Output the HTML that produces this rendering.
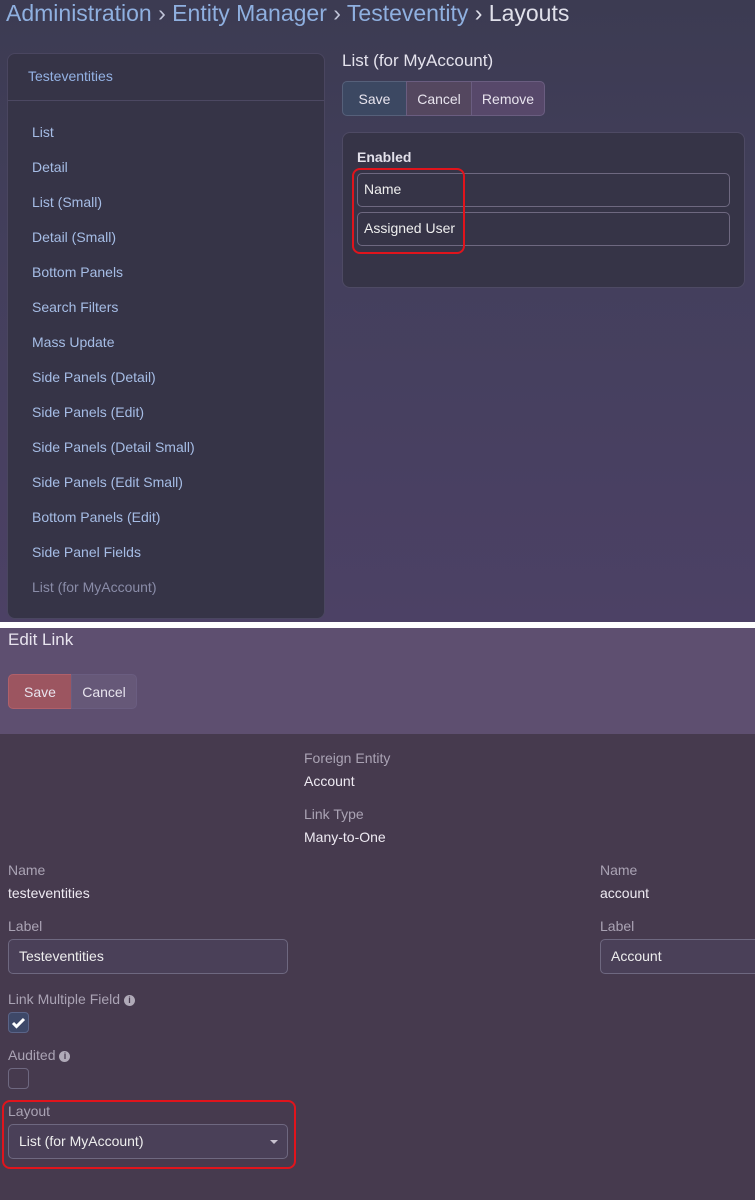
<!DOCTYPE html>
<html><head><meta charset="utf-8"><style>
*{box-sizing:border-box;margin:0;padding:0}
body{width:755px;height:1200px;position:relative;overflow:hidden;font-family:"Liberation Sans",sans-serif;background:#fff}
.a{position:absolute;white-space:nowrap}
#top{position:absolute;left:0;top:0;width:755px;height:622px;background:linear-gradient(180deg,#3c3b52 0%,#433f5c 40%,#4c4165 100%)}
#b1{position:absolute;left:0;top:628px;width:755px;height:106px;background:#5e4f70}
#b2{position:absolute;left:0;top:734px;width:755px;height:466px;background:#463a4e}
.side{position:absolute;left:7px;top:53px;width:318px;height:566px;background:#363447;border:1px solid #4a4660;border-radius:8px}
.it{position:absolute;left:32px;font-size:14px;color:#a6bde6}
.btn{position:absolute;height:35px;font-size:14px;color:#e8e4ee;text-align:center;line-height:34px;border:1px solid #6a5d80}
.inp{position:absolute;border:1px solid #6e6880;border-radius:5px;font-size:14px;color:#eee;padding-left:6px;line-height:31px}
.lbl{font-size:14px;color:#aaa3b4}
.val{font-size:14px;color:#eeeaf2}
.red{position:absolute;border:2px solid #e0141c;border-radius:8px}
.ic{display:inline-block;width:11px;height:11px;border-radius:50%;background:#b0aab8;color:#463a4e;font-size:9px;font-weight:bold;text-align:center;line-height:11px;vertical-align:1px;margin-left:4px}
</style></head><body>
<div id="top"></div>
<div class="a" style="left:6px;top:0px;font-size:23px;color:#8fb0e0">Administration <span style="color:#c0c4d8">›</span> Entity Manager <span style="color:#c0c4d8">›</span> Testeventity <span style="color:#e0e0ea">› Layouts</span></div>
<div class="side"></div>
<div class="a" style="left:28px;top:68px;font-size:14px;color:#94b2e4">Testeventities</div>
<div class="a" style="left:8px;top:100px;width:316px;height:1px;background:#4c4862"></div>
<div class="it a" style="top:124px">List</div>
<div class="it a" style="top:159px">Detail</div>
<div class="it a" style="top:194px">List (Small)</div>
<div class="it a" style="top:229px">Detail (Small)</div>
<div class="it a" style="top:264px">Bottom Panels</div>
<div class="it a" style="top:299px">Search Filters</div>
<div class="it a" style="top:334px">Mass Update</div>
<div class="it a" style="top:369px">Side Panels (Detail)</div>
<div class="it a" style="top:404px">Side Panels (Edit)</div>
<div class="it a" style="top:439px">Side Panels (Detail Small)</div>
<div class="it a" style="top:474px">Side Panels (Edit Small)</div>
<div class="it a" style="top:509px">Bottom Panels (Edit)</div>
<div class="it a" style="top:544px">Side Panel Fields</div>
<div class="it a" style="top:579px;color:#8a8ca8">List (for MyAccount)</div>

<div class="a" style="left:342px;top:51px;font-size:17px;color:#e4e2ec">List (for MyAccount)</div>
<div class="btn" style="left:342px;top:81px;width:65px;background:#3c4862;border-color:#56607a;border-radius:5px 0 0 5px">Save</div>
<div class="btn" style="left:406px;top:81px;width:66px;background:#54475f">Cancel</div>
<div class="btn" style="left:471px;top:81px;width:74px;background:#57486a;border-radius:0 5px 5px 0">Remove</div>
<div class="a" style="left:342px;top:132px;width:403px;height:156px;background:#363447;border:1px solid #4e4a64;border-radius:8px"></div>
<div class="a" style="left:357px;top:149px;font-size:14px;font-weight:bold;color:#e2e0ea">Enabled</div>
<div class="inp" style="left:357px;top:173px;width:373px;height:34px">Name</div>
<div class="inp" style="left:357px;top:212px;width:373px;height:34px">Assigned User</div>
<div class="red" style="left:352px;top:168px;width:113px;height:86px"></div>

<div id="b1"></div>
<div id="b2"></div>
<div class="a" style="left:8px;top:630px;font-size:17px;color:#e8e4ee">Edit Link</div>
<div class="btn" style="left:8px;top:674px;width:64px;background:#9c5560;border-color:#b0606a;border-radius:5px 0 0 5px">Save</div>
<div class="btn" style="left:71px;top:674px;width:66px;background:#665878;border-radius:0 5px 5px 0">Cancel</div>

<div class="a lbl" style="left:304px;top:750px">Foreign Entity</div>
<div class="a val" style="left:304px;top:773px">Account</div>
<div class="a lbl" style="left:304px;top:806px">Link Type</div>
<div class="a val" style="left:304px;top:829px">Many-to-One</div>
<div class="a lbl" style="left:8px;top:862px">Name</div>
<div class="a val" style="left:8px;top:885px">testeventities</div>
<div class="a lbl" style="left:600px;top:862px">Name</div>
<div class="a val" style="left:600px;top:885px">account</div>
<div class="a lbl" style="left:8px;top:918px">Label</div>
<div class="inp" style="left:8px;top:939px;width:280px;height:35px;background:#4a4058;padding-left:10px;line-height:33px">Testeventities</div>
<div class="a lbl" style="left:600px;top:918px">Label</div>
<div class="inp" style="left:600px;top:939px;width:170px;height:35px;background:#4a4058;padding-left:10px;line-height:33px">Account</div>
<div class="a lbl" style="left:8px;top:991px">Link Multiple Field<span class="ic">i</span></div>
<div class="a" style="left:8px;top:1012px;width:21px;height:21px;border-radius:4px;background:#3e4868;border:1px solid #5a6488"><svg width="19" height="19" viewBox="0 0 19 19"><path d="M4 10l3.5 3.5L15 6" stroke="#fff" stroke-width="3" fill="none"/></svg></div>
<div class="a lbl" style="left:8px;top:1047px">Audited<span class="ic">i</span></div>
<div class="a" style="left:8px;top:1068px;width:21px;height:21px;border-radius:4px;border:1px solid #6e6880"></div>
<div class="a lbl" style="left:8px;top:1103px">Layout</div>
<div class="inp" style="left:8px;top:1124px;width:280px;height:35px;background:#4a4058;padding-left:10px;line-height:33px">List (for MyAccount)</div>
<div class="a" style="left:270px;top:1140px;width:0;height:0;border-left:4px solid transparent;border-right:4px solid transparent;border-top:4px solid #c8c2d0"></div>
<div class="red" style="left:2px;top:1100px;width:294px;height:69px"></div>
</body></html>
